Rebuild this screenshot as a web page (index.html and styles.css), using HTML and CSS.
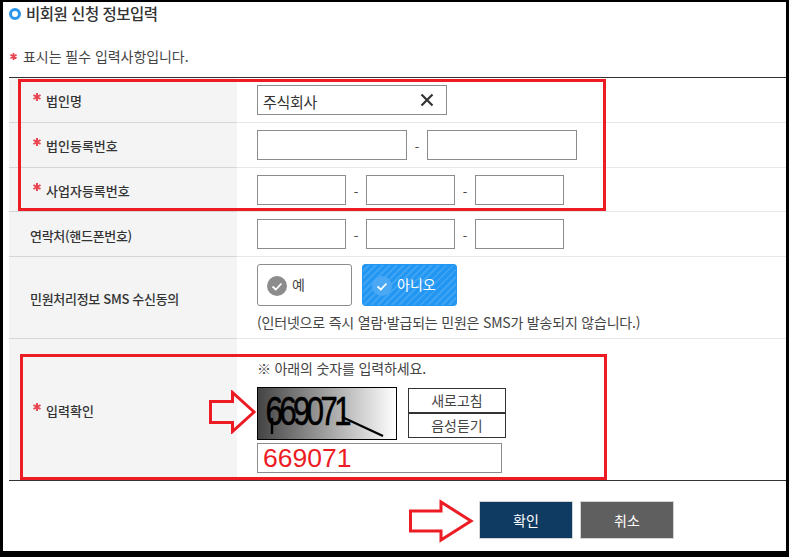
FILE: index.html
```html
<!DOCTYPE html>
<html lang="ko">
<head>
<meta charset="utf-8">
<title>비회원 신청 정보입력</title>
<link rel="stylesheet" href="styles.css">
</head>
<body>
<div class="page">
  <main class="panel">
    <header class="head">
      <h1 class="title"><span class="bullet"></span>비회원 신청 정보입력</h1>
      <p class="note"><svg class="star" viewBox="0 0 8 8"><path d="M4 0V8M.5 2 7.5 6M.5 6 7.5 2"/></svg>표시는 필수 입력사항입니다.</p>
    </header>
    <section class="form">
      <div class="row">
        <div class="label"><svg class="star" viewBox="0 0 8 8"><path d="M4 0V8M.5 2 7.5 6M.5 6 7.5 2"/></svg>법인명</div>
        <div class="field">
          <div class="clearbox">
            <input class="input input-clear" type="text" value="주식회사">
            <svg class="clear" width="14" height="14" viewBox="0 0 14 14"><path d="M1.5 1.5 12.5 12.5M12.5 1.5 1.5 12.5" stroke="#333" stroke-width="2.2" fill="none"/></svg>
          </div>
        </div>
      </div>
      <div class="row">
        <div class="label"><svg class="star" viewBox="0 0 8 8"><path d="M4 0V8M.5 2 7.5 6M.5 6 7.5 2"/></svg>법인등록번호</div>
        <div class="field">
          <input class="input input-long" type="text"><span class="dash">-</span><input class="input input-long" type="text">
        </div>
      </div>
      <div class="row row-tight">
        <div class="label label-low"><svg class="star" viewBox="0 0 8 8"><path d="M4 0V8M.5 2 7.5 6M.5 6 7.5 2"/></svg>사업자등록번호</div>
        <div class="field">
          <input class="input input-short" type="text"><span class="dash">-</span><input class="input input-short" type="text"><span class="dash">-</span><input class="input input-short" type="text">
        </div>
      </div>
      <div class="row">
        <div class="label label-plain label-low">연락처(핸드폰번호)</div>
        <div class="field">
          <input class="input input-short" type="text"><span class="dash">-</span><input class="input input-short" type="text"><span class="dash">-</span><input class="input input-short" type="text">
        </div>
      </div>
      <div class="row row-sms">
        <div class="label label-plain label-low">민원처리정보 SMS 수신동의</div>
        <div class="field field-col">
          <div class="choices">
            <div class="choice">
              <span class="tick tick-off"><svg width="20" height="20" viewBox="0 0 20 20"><path d="M5.5 10.5 8.8 13.5 14.5 7.5" stroke="#fff" stroke-width="1.8" fill="none"/></svg></span>예
            </div>
            <div class="choice choice-on">
              <span class="tick tick-on"><svg width="20" height="20" viewBox="0 0 20 20"><path d="M5.5 10.5 8.8 13.5 14.5 7.5" stroke="#fff" stroke-width="1.8" fill="none"/></svg></span>아니오
            </div>
          </div>
          <p class="hint">(인터넷으로 즉시 열람·발급되는 민원은 SMS가 발송되지 않습니다.)</p>
        </div>
      </div>
      <div class="row row-captcha">
        <div class="label label-low"><svg class="star" viewBox="0 0 8 8"><path d="M4 0V8M.5 2 7.5 6M.5 6 7.5 2"/></svg>입력확인</div>
        <div class="field field-col field-captcha">
          <p class="captcha-note">※ 아래의 숫자를 입력하세요.</p>
          <div class="captcha-line">
            <div class="captcha">
              <span class="captcha-digits">669071</span>
              <svg class="captcha-noise" width="138" height="51" viewBox="0 0 138 51"><path d="M14 30V46M84 29 125 48" stroke="#000" stroke-width="2.4" fill="none"/></svg>
            </div>
            <div class="captcha-btns">
              <button class="cbtn" type="button">새로고침</button>
              <button class="cbtn" type="button">음성듣기</button>
            </div>
          </div>
          <input class="input input-captcha" type="text" value="669071">
        </div>
      </div>
    </section>
    <footer class="actions">
      <button class="btn btn-ok" type="button">확인</button>
      <button class="btn btn-cancel" type="button">취소</button>
    </footer>
  </main>

  <div class="mark mark-top"></div>
  <div class="mark mark-bottom"></div>
  <svg class="arrow arrow-captcha" width="48" height="44" viewBox="0 0 48 44"><path d="M1.5 11.5H23.5V2.5L45 22 23.5 41.5V32.5H1.5Z" fill="none" stroke="#ed1c24" stroke-width="3"/></svg>
  <svg class="arrow arrow-submit" width="66" height="44" viewBox="0 0 66 44"><path d="M2.5 12H33V3L63 22 33 41V32H2.5Z" fill="none" stroke="#ed1c24" stroke-width="3"/></svg>
</div>
</body>
</html>
```
FILE: styles.css
```css
* { box-sizing: border-box; }
html, body { margin: 0; padding: 0; background: #000; }
body { font-family: "Noto Sans CJK KR", "Noto Sans", sans-serif; color: #333; }
p, h1 { margin: 0; }

.page { position: relative; width: 789px; height: 557px; padding: 2px 3px 6px; overflow: hidden; }
.panel { height: 549px; background: #fff; padding-left: 6px; }

.head { height: 75px; padding-top: 2px; }
.title { display: flex; align-items: center; height: 19px; font-size: 15.5px; font-weight: 500; letter-spacing: -.5px; line-height: 19px; color: #333; }
.bullet { width: 12px; height: 12px; margin-right: 5px; border: 3px solid #2b95e9; border-radius: 50%; background: #fff; }
.note { display: flex; align-items: center; height: 18px; margin-top: 24px; font-size: 14px; line-height: 18px; letter-spacing: -.05px; color: #444; }
.note .star { width: 7px; height: 7px; margin: 0 6px 0 1px; }
.star { flex: none; width: 8px; height: 8px; margin: -7px 5px 0 0; fill: none; stroke: #ea4450; stroke-width: 2; }

.form { border-top: 1px solid #333; border-bottom: 1px solid #333; }
.row { display: flex; height: 45px; }
.row-tight { height: 44px; }
.row-sms { height: 82px; }
.row-captcha { height: 141px; }
.label { display: flex; align-items: center; width: 228px; padding-left: 24px; background: #f4f4f4; border-bottom: 1px solid #d6d6d6; font-size: 13px; font-weight: 500; color: #333; }
.label-plain { padding-left: 21px; letter-spacing: -.3px; }
.label-low { padding-top: 2px; }
.field { flex: 1; display: flex; align-items: flex-start; padding: 7px 0 0 20px; border-bottom: 1px solid #e8e8e8; }
.field-col { flex-direction: column; }
.row-captcha .label, .row-captcha .field { border-bottom: 0; }

.input { height: 30px; padding: 0 5px; border: 1px solid #8c8c8c; border-radius: 0; background: #fff; font-family: inherit; font-size: 15px; letter-spacing: -.3px; color: #333; outline: 0; }
.input-long { width: 150px; }
.input-short { width: 89px; }
.clearbox { position: relative; width: 190px; }
.input-clear { width: 190px; padding-top: 2px; }
.clear { position: absolute; top: 8px; right: 13px; }
.dash { width: 20px; text-align: center; font-size: 13px; line-height: 34px; color: #444; }

.choices { display: flex; gap: 10px; }
.choice { display: flex; align-items: center; width: 95px; height: 42px; padding: 0 0 2px 9px; border: 1px solid #8c8c8c; border-radius: 3px; font-size: 14px; color: #444; }
.choice-on { border-color: #2196f3; color: #fff; background: repeating-linear-gradient(135deg, #2196f3 0 3px, #3ea3f3 3px 5px); }
.tick { display: flex; width: 20px; height: 20px; margin: 4px 5px 0 0; border-radius: 50%; }
.tick-off { background: #8c8c8c; }
.tick-on { background: #4ba8f5; }
.hint { margin-top: 7px; font-size: 14px; line-height: 18px; letter-spacing: -.2px; color: #444; white-space: nowrap; }

.field-captcha { padding-top: 20px; }
.captcha-note { font-size: 14px; line-height: 18px; letter-spacing: -.15px; color: #444; }
.captcha-line { display: flex; align-items: flex-start; margin-top: 10px; }
.captcha { position: relative; width: 140px; height: 53px; overflow: hidden; border: 1px solid #000; background: linear-gradient(90deg, #444, #fff); }
.captcha-digits { display: block; margin-left: -1px; padding-left: 11px; font-family: "Liberation Sans", sans-serif; font-size: 41px; line-height: 46px; letter-spacing: -5px; color: #000; -webkit-text-stroke: .5px #000; transform: scaleX(.77); transform-origin: 0 0; }
.captcha-noise { position: absolute; top: 0; left: 0; }
.captcha-btns { display: flex; flex-direction: column; margin: 1px 0 0 11px; }
.cbtn { width: 98px; height: 25px; padding: 0 0 2px; border: 1px solid #333; background: #fff; font-family: inherit; font-size: 14px; color: #444; }
.input-captcha { width: 245px; margin-top: 3px; font-family: "Liberation Sans", sans-serif; font-size: 26.5px; letter-spacing: 0; color: #ed1c24; }

.actions { display: flex; gap: 7px; padding: 20px 0 0 470px; }
.btn { width: 94px; height: 38px; padding: 0; border: 1px solid #d4d4d4; font-family: inherit; font-size: 14px; color: #fff; }
.btn-ok { background: #0f3a62; }
.btn-cancel { background: #5f5f5f; }

.mark { position: absolute; border: 3px solid #ed1c24; }
.mark-top { top: 79px; left: 18px; width: 588px; height: 132px; }
.mark-bottom { top: 354px; left: 20px; width: 587px; height: 126px; }
.arrow { position: absolute; }
.arrow-captcha { top: 390px; left: 209px; }
.arrow-submit { top: 499px; left: 408px; }
```
